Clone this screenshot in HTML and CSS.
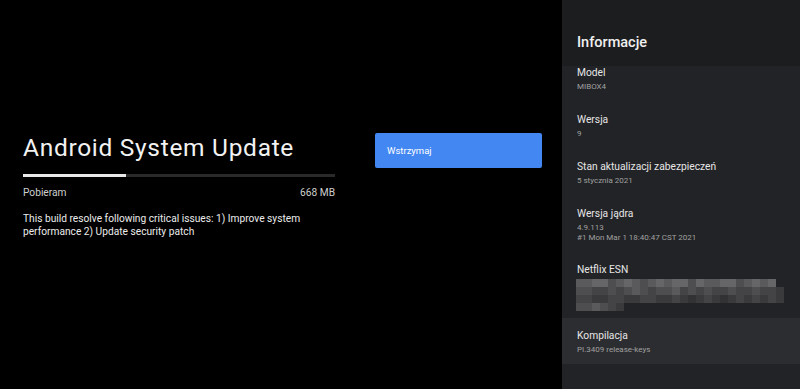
FILE: index.html
```html
<!DOCTYPE html>
<html lang="pl">
<head>
<meta charset="utf-8">
<title>Android System Update</title>
<link rel="stylesheet" href="styles.css">
</head>
<body>
<div class="screen">
  <main class="main">
    <section class="update">
      <h1 class="title">Android System Update</h1>
      <div class="progress"><div class="progress-fill"></div></div>
      <div class="status"><span>Pobieram</span><span>668 MB</span></div>
      <p class="desc">This build resolve following critical issues: 1) Improve system performance 2) Update security patch</p>
    </section>
    <div class="actions">
      <button class="btn">Wstrzymaj</button>
    </div>
  </main>
  <aside class="panel">
    <header class="panel-head">Informacje</header>
    <div class="list">
      <div class="item first">
        <div class="label">Model</div>
        <div class="sub">MIBOX4</div>
      </div>
      <div class="item">
        <div class="label">Wersja</div>
        <div class="sub">9</div>
      </div>
      <div class="item">
        <div class="label">Stan aktualizacji zabezpieczeń</div>
        <div class="sub">5 stycznia 2021</div>
      </div>
      <div class="item kernel">
        <div class="label">Wersja jądra</div>
        <div class="sub">4.9.113</div>
        <div class="sub">#1 Mon Mar 1 18:40:47 CST 2021</div>
      </div>
      <div class="item esn">
        <div class="label">Netflix ESN</div>
        <div class="mosaic">
          <div class="mrow"><span class="m5"></span><span class="m5"></span><span class="m6"></span><span class="m6"></span><span class="m4"></span><span class="m5"></span><span class="m6"></span><span class="m5"></span><span class="m4"></span><span class="m5"></span><span class="m6"></span><span class="m5"></span><span class="m6"></span><span class="m6"></span><span class="m4"></span><span class="m6"></span><span class="m5"></span><span class="m5"></span><span class="m6"></span><span class="m6"></span><span class="m4"></span><span class="m5"></span><span class="m6"></span><span class="m5"></span><span class="m6"></span></div>
          <div class="mrow"><span class="m4"></span><span class="m4"></span><span class="m3"></span><span class="m3"></span><span class="m4"></span><span class="m3"></span><span class="m4"></span><span class="m5"></span><span class="m4"></span><span class="m3"></span><span class="m4"></span><span class="m4"></span><span class="m5"></span><span class="m3"></span><span class="m4"></span><span class="m3"></span><span class="m4"></span><span class="m3"></span><span class="m3"></span><span class="m4"></span><span class="m3"></span><span class="m3"></span><span class="m4"></span><span class="m3"></span><span class="m3"></span><span class="m2"></span></div>
          <div class="mrow"><span class="m3"></span><span class="m3"></span><span class="m2"></span><span class="m2"></span><span class="m3"></span><span class="m3"></span><span class="m2"></span><span class="m2"></span><span class="m3"></span><span class="m3"></span><span class="m2"></span><span class="m2"></span><span class="m3"></span><span class="m2"></span><span class="m1"></span><span class="m2"></span><span class="m3"></span><span class="m2"></span><span class="m1"></span><span class="m2"></span><span class="m3"></span><span class="m2"></span><span class="m3"></span><span class="m2"></span><span class="m3"></span><span class="m2"></span></div>
          <div class="mrow"><span class="m4"></span><span class="m4"></span><span class="m5"></span><span class="m4"></span><span class="m3"></span><span class="m2"></span></div>
        </div>
      </div>
      <div class="item selected">
        <div class="label">Kompilacja</div>
        <div class="sub">PI.3409 release-keys</div>
      </div>
    </div>
  </aside>
</div>
</body>
</html>
```

FILE: styles.css
```css
* { box-sizing: border-box; margin: 0; padding: 0; }
html, body { width: 800px; height: 389px; overflow: hidden; background: #000; }
body { font-family: Roboto, "Noto Sans", sans-serif; color: #eee; }

.screen { display: flex; width: 800px; height: 389px; }

.main {
  width: 562px;
  display: flex;
  align-items: flex-start;
  padding: 133px 0 0 23px;
}
.update { width: 312px; }
.title {
  font-weight: 400;
  font-size: 24.5px;
  line-height: 30px;
  letter-spacing: 0.7px;
  color: #f2f2f2;
}
.progress {
  margin-top: 11px;
  height: 3px;
  background: #2a2a2a;
  width: 312px;
}
.progress-fill { width: 103px; height: 3px; background: #e8e8e8; }
.status {
  display: flex;
  justify-content: space-between;
  margin-top: 8.5px;
  font-size: 10.2px;
  line-height: 14px;
  color: #cfcfcf;
}
.desc {
  margin-top: 12px;
  font-size: 10.2px;
  line-height: 13.5px;
  color: #ececec;
  width: 300px;
}
.actions { margin-left: 40px; }
.btn {
  display: block;
  width: 167px;
  height: 35px;
  background: #4387f2;
  border: none;
  border-radius: 2px;
  color: #fff;
  font-family: Roboto, "Noto Sans", sans-serif;
  font-size: 9.5px;
  text-align: left;
  padding-left: 12px;
}

.panel {
  width: 238px;
  background: #222326;
  display: flex;
  flex-direction: column;
}
.panel-head {
  height: 66px;
  background: #1c1d1f;
  padding: 34px 0 0 15px;
  font-size: 14.5px;
  font-weight: 500;
  line-height: 18px;
  color: #f0f0f0;
}
.list { margin-top: -1px; }
.item { padding: 10px 15px 10px; }
.item.first { padding-top: 0; }
.label { font-size: 10.25px; line-height: 16px; color: #e6e6e6; }
.sub { font-size: 8px; line-height: 10px; color: #a0a0a0; }
.label + .sub { margin-top: 1px; }
.kernel { padding-bottom: 9px; }
.esn { padding-bottom: 7px; }
.selected { background: #2c2d30; padding-bottom: 9px; }

.mosaic { margin-top: 1px; margin-left: -1px; }
.mrow { display: flex; height: 8px; }
.mrow span { width: 8px; height: 8px; }
.m1 { background: #323234; }
.m2 { background: #3a3a3c; }
.m3 { background: #444446; }
.m4 { background: #4e4e50; }
.m5 { background: #5a5a5c; }
.m6 { background: #666668; }
```
